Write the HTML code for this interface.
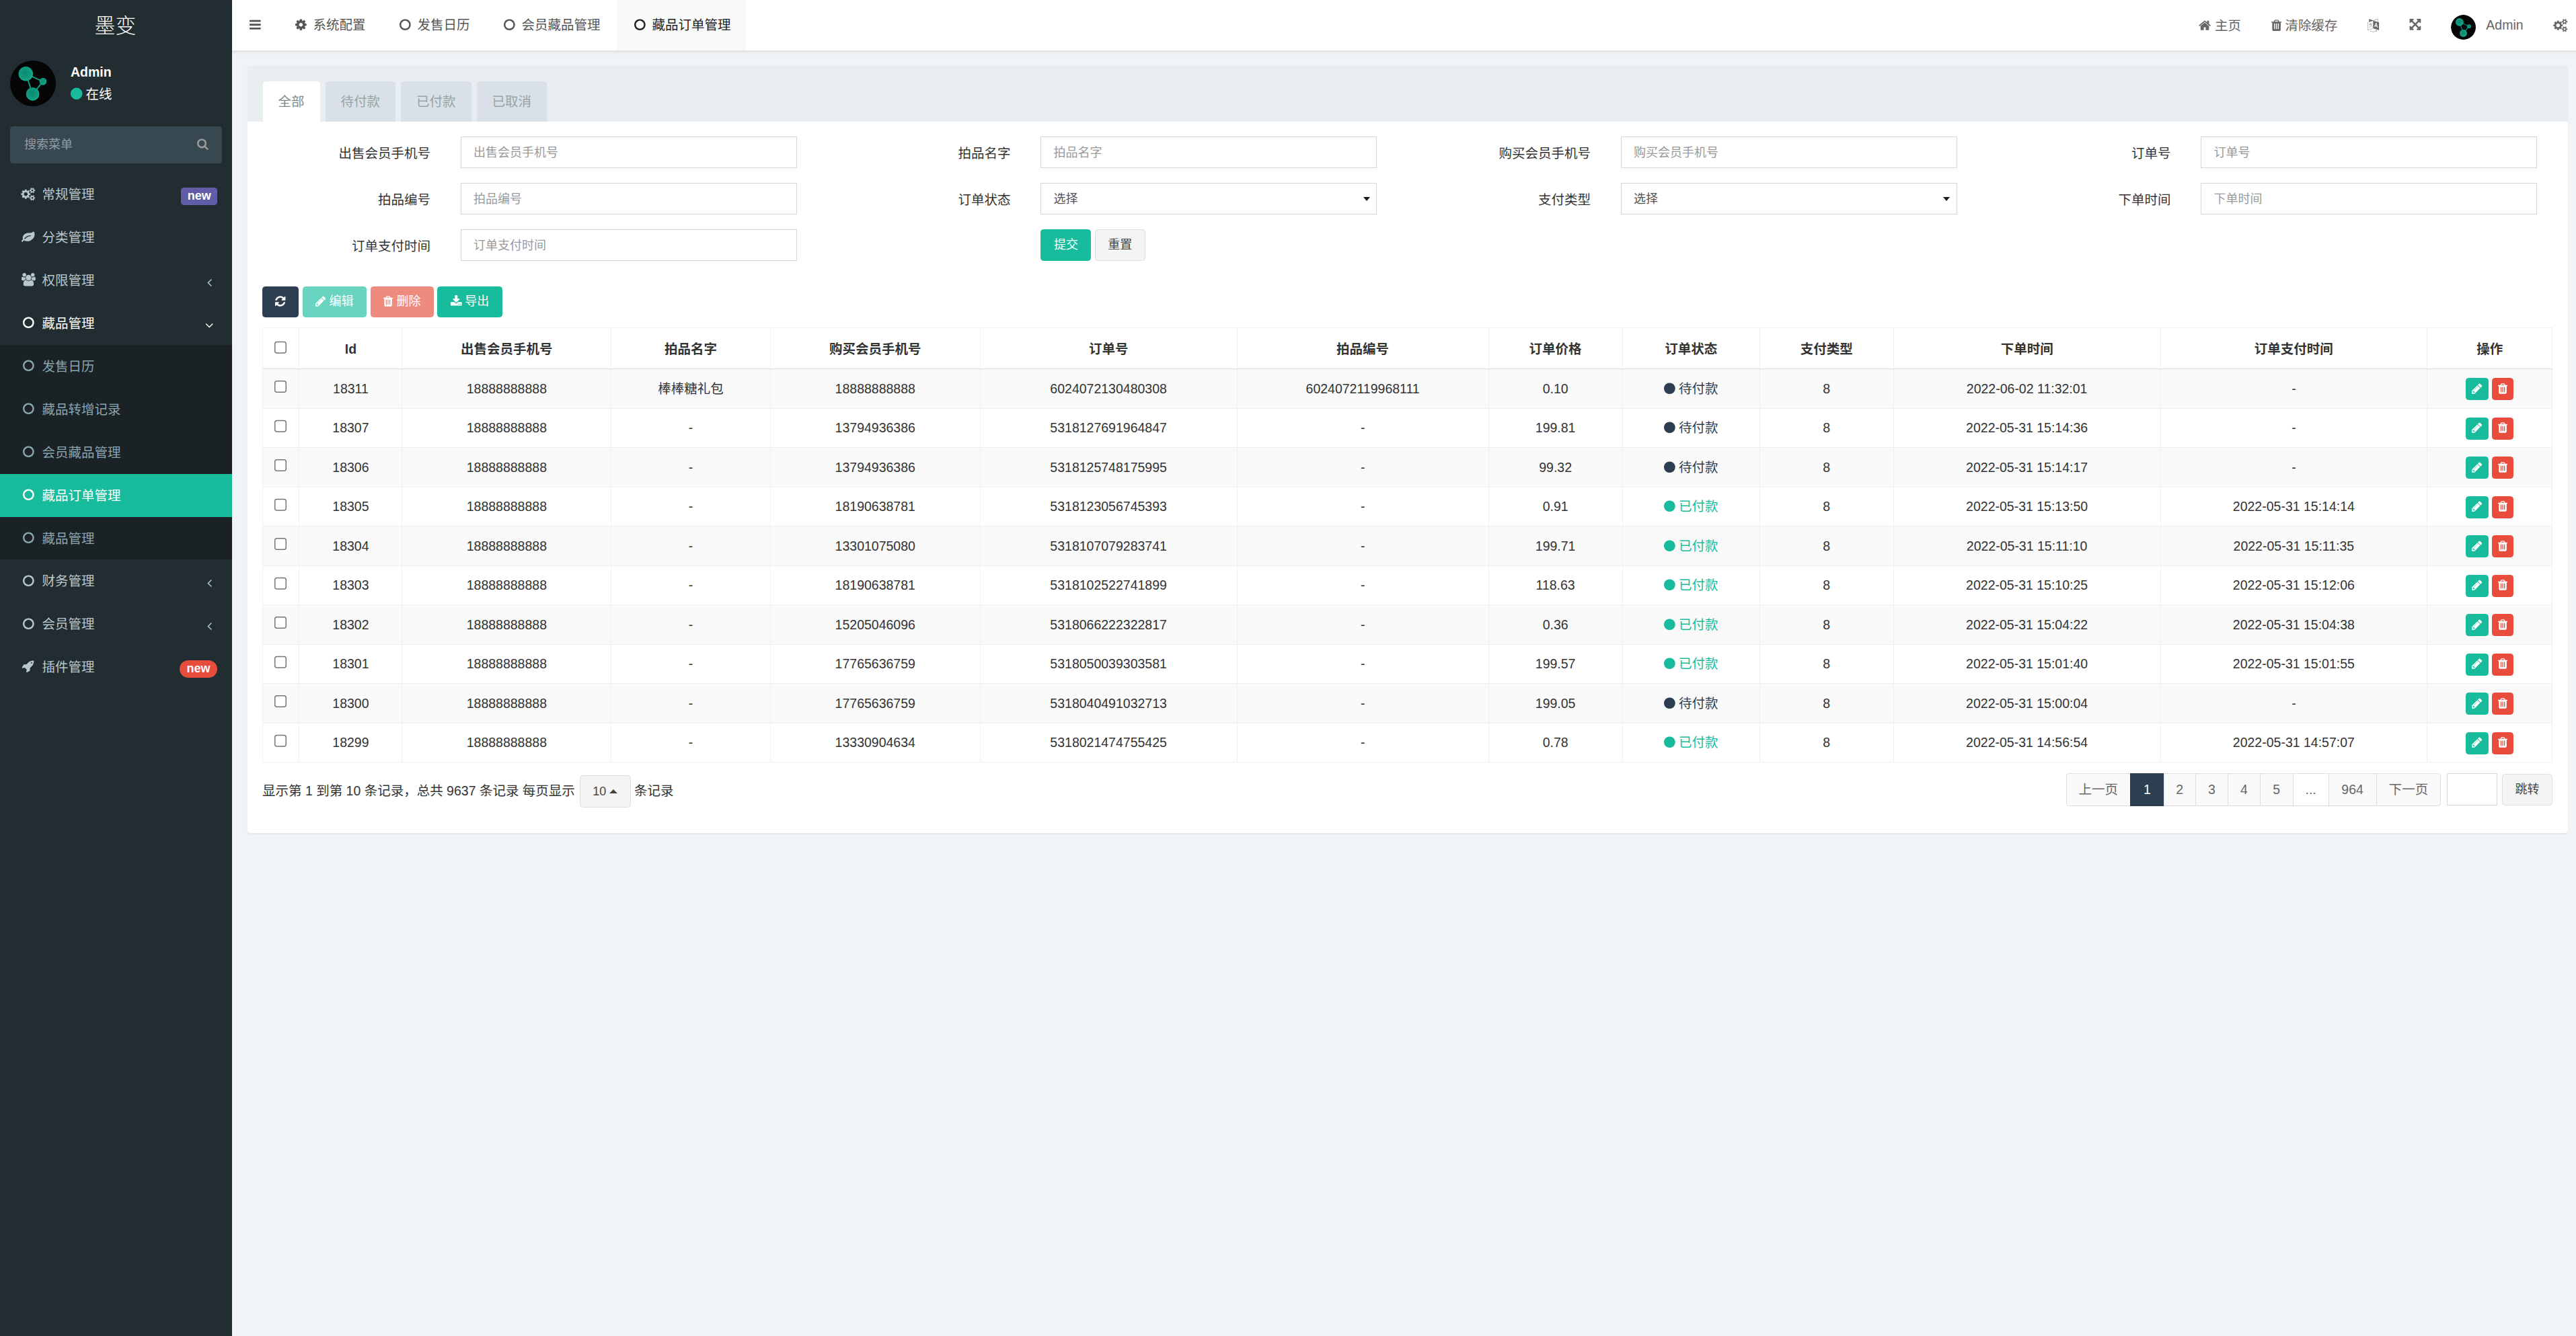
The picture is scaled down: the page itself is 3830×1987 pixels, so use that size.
<!DOCTYPE html>
<html lang="zh-CN"><head><meta charset="utf-8"><title>墨变</title>
<style>
*{box-sizing:border-box}
html,body{margin:0;padding:0;overflow:hidden;background:#f1f4f6}
body{font-family:"Liberation Sans","Noto Sans CJK SC",sans-serif;font-size:13px;line-height:1.42857;color:#333}
#w{zoom:1.5;width:2560px;height:1326px;position:relative;overflow:hidden;background:#f1f4f6}
a{text-decoration:none;color:inherit}
ul{list-style:none;margin:0;padding:0}
.fa{display:inline-block;height:1em;vertical-align:-0.143em;fill:currentColor;overflow:visible}
.fw{display:inline-block;width:1.2857em;text-align:center}
/* header */
.main-header{position:absolute;left:0;top:0;width:2560px;height:50px;z-index:10}
.logo{position:absolute;left:0;top:0;width:230px;height:50px;line-height:51.4px;text-align:center;font-size:20.6px;color:#fff;background:#222d32;font-weight:300;padding-right:1.4px}
.navbar{position:absolute;left:230px;top:0;right:0;height:50px;background:#fff;box-shadow:0 1px 3px rgba(0,0,0,.1)}
.sidebar-toggle{position:absolute;left:0;top:0;width:45px;height:50px;padding:14.5px 0 0 17px;line-height:20px;color:#555}
.addtabs{position:absolute;left:45px;top:0;height:50px;display:flex}
.addtabs li{height:50px;margin-right:1px}
.addtabs li a{display:block;height:50px;line-height:50px;padding:0 15px;color:#555;white-space:pre}
.addtabs li.active a{background:#f9f9f9;color:#222}
.custom-menu{position:absolute;right:0;top:0;height:50px;display:flex}
.custom-menu li a{display:block;padding:15px;line-height:20px;height:50px;color:#666;white-space:pre}
.custom-menu li.user a{padding-top:14.5px;padding-bottom:10.5px}
.custom-menu li.n2 a,.custom-menu li.n4 a{padding-right:14px}
.user-image{float:left;width:25px;height:25px;margin-right:10px;border-radius:50%}
.custom-menu li.user span{line-height:20px;display:inline-block}
/* sidebar */
.main-sidebar{position:absolute;left:0;top:0;width:230px;height:1326px;padding-top:50px;background:#222d32;z-index:5}
.user-panel{position:relative;padding:10px;height:65px}
.user-panel .img{position:absolute;left:10px;top:9.7px;width:45.4px;height:45.4px}
.user-panel .info{position:absolute;left:55px;top:10px;padding:2.9px 5px 5px 15px;color:#fff;line-height:1}
.user-panel .info p{font-weight:700;margin:0 0 5.6px 0;line-height:18px}
.user-panel .online{color:#18bc9c;font-size:13.6px;margin-right:3.4px;position:relative;top:-0.3px}
.sidebar-form{margin:10px 10px 9.6px;height:37px;border-radius:3px;background:#374850;position:relative;color:#8b9ba3;font-size:13px}
.sidebar-form .ph{position:absolute;left:14px;top:0;line-height:36px;color:#8e9ea6;font-size:12px}
.sidebar-form .sbtn{position:absolute;right:13.5px;top:0;line-height:36px;color:#999;font-size:12px}
.sidebar-menu>li>a,.treeview-menu>li>a{display:block;position:relative;padding:12px 5px 12px 18px;color:#b8c7ce;white-space:pre;height:42.6px;line-height:18.6px}
.sidebar-menu .fw{width:20px}
.sidebar-menu>li.open>a{color:#fff}
.treeview-menu{background:#1a2226}
.treeview-menu>li>a{color:#8aa4af}
.treeview-menu>li.active>a{background:#18bc9c;color:#fff}
.prc{position:absolute;right:14.6px;top:0;line-height:42.6px}
.prc.ang{right:20.2px;top:2.4px}
.prc.ang.dn{right:18.1px}
.sidebar-menu a>span:not(.prc):not(.fw){position:relative;top:0.7px}
.label{display:inline-block;font-size:12px;font-weight:700;color:#fff;line-height:1;padding:2px 6.3px 3px;border-radius:3px;vertical-align:middle;position:relative;top:1.3px}
.bg-purple{background:#605ca8}
.bg-red{background:#e74c3c;border-radius:9px;padding:2px 7px 3px}
/* content */
.content-wrapper{position:absolute;left:230px;top:50px;width:2330px;padding:15px}
.panel{background:#fff;border-radius:3px;box-shadow:0 1px 1px rgba(0,0,0,.05);width:2300px}
.panel-heading{background:#e8edf0;padding:15.67px 15.4px 0;height:55.67px;border-radius:3px 3px 0 0}
.nav-tabs{display:flex}
.nav-tabs li{margin-right:5.33px}
.nav-tabs li a{display:block;padding:0 14.67px;height:40px;line-height:39px;border:1px solid transparent;border-bottom:0;background:#d9e0e7;color:#95a5a6;border-radius:3px 3px 0 0}
.nav-tabs li.active a{background:#fff;color:#7b8a8b}
.panel-body{padding:14.7px 15px 15px}
/* form */
.commonsearch{margin:0 -15px}
.frow{display:flex;flex-wrap:wrap}
.col{width:25%;padding:0 15px}
.fg{display:flex;margin-bottom:14.6px;height:31.4px}
.fg label{width:33.3333%;padding:0 15px;text-align:right;line-height:31px;padding-top:1px;color:#333;white-space:nowrap}
.fg .ctl{width:66.6667%;padding:0 15px;white-space:pre}
.fc{display:block;height:31.4px;border:1px solid #d2d6de;background:#fff;font-size:12px;padding:0 12px;line-height:31px;color:#999;position:relative;border-radius:0}
.fc.sel{color:#555}
.fc.sel i{position:absolute;right:6.4px;top:13.3px;width:0;height:0;border-left:3.6px solid transparent;border-right:3.6px solid transparent;border-top:4.2px solid #1a1a1a}
.btn{display:inline-block;padding:6.33px 12.33px;font-size:12px;line-height:17.14px;border:1px solid transparent;border-radius:3px;text-align:center;white-space:pre;vertical-align:middle}
.btn-success{background:#18bc9c;border-color:#18bc9c;color:#fff}
.btn-danger{background:#e74c3c;border-color:#e74c3c;color:#fff}
.btn-primary{background:#2c3e50;border-color:#2c3e50;color:#fff}
.btn-default{background:#f4f4f4;border-color:#ddd;color:#444}
.btn.disabled{opacity:.65}
.toolbar{margin:10.6px 0 10px;height:31px;white-space:nowrap;font-size:0;display:flex}
.toolbar .btn{margin-right:4px;font-size:12px;padding-left:0;padding-right:0}
.toolbar .b1{width:36px}.toolbar .b2{width:63.2px;margin-right:4.4px}.toolbar .b3{width:62.2px;margin-right:3.7px}.toolbar .b4{width:64.3px}
/* table */
.table{border-collapse:collapse;table-layout:fixed;width:2270px;border:1px solid #f0f0f0}
.table th,.table td{border:1px solid #f0f0f0;text-align:center;vertical-align:middle;padding:0}
.table th{border-bottom:1px solid #ddd;font-weight:700}
.th-inner{padding:8.6px 8px 7.4px;line-height:24px;white-space:nowrap}
.table td{padding:0 8px 0.7px;height:39px;line-height:20px;white-space:nowrap}
.table tbody tr:nth-child(odd){background:#f9f9f9}
.table input{margin:0;width:13px;height:13px;vertical-align:middle;position:relative;top:-2.6px}
.btn-xs{padding:1.33px 5.4px;font-size:12px;line-height:18px;position:relative;top:0.6px}
.text-primary{color:#2c3e50}
.text-success{color:#18bc9c}
/* pagination */
.fixed-table-pagination{height:54.7px;position:relative}
.pagination-detail{position:absolute;left:0;top:11px;line-height:34px;white-space:pre}
.pagination-detail .btn{padding:6.33px 12.2px;line-height:18px;vertical-align:middle;margin-top:-0.6px;margin-left:1.2px}
.pull-right{position:absolute;right:0;top:10.6px;display:flex}
.pagination{display:flex;border-radius:3px}
.pagination li a{display:block;padding:6.33px 0;text-align:center;line-height:18.57px;border:1px solid #ddd;border-right:0;background:#fafafa;color:#666}
.pagination li:last-child a{border-right:1px solid #ddd;border-radius:0 3px 3px 0}
.pagination li:first-child a{border-radius:3px 0 0 3px}
.pagination li.active a{background:#2c3e50;border-color:#2c3e50;color:#fff}
.pagination li.dots a{background:#fff}
.jumpto{display:flex;margin-left:5.4px}
.jumpto .fc{width:50px;height:31.6px}
.jumpto .btn{margin-left:5px;width:50px;padding:6.33px 0;height:31px;margin-top:0.6px}

.caret{display:inline-block;width:0;height:0;vertical-align:middle;border-bottom:4px solid #444;border-left:4px solid transparent;border-right:4px solid transparent;position:relative;top:-0.5px}

</style></head>
<body><div id="w">

<header class="main-header">
<a class="logo">墨变</a>
<nav class="navbar">
<a class="sidebar-toggle"><svg class="fa" viewBox="128 0 1536 1792" style="width:0.8571em;"><path d="M1664 1344v128q0 26-19 45t-45 19h-1408q-26 0-45-19t-19-45v-128q0-26 19-45t45-19h1408q26 0 45 19t19 45zm0-512v128q0 26-19 45t-45 19h-1408q-26 0-45-19t-19-45v-128q0-26 19-45t45-19h1408q26 0 45 19t19 45zm0-512v128q0 26-19 45t-45 19h-1408q-26 0-45-19t-19-45v-128q0-26 19-45t45-19h1408q26 0 45 19t19 45z"/></svg></a>
<ul class="addtabs">
<li><a><span class="fw"><svg class="fa" viewBox="128 0 1536 1792" style="width:0.8571em;"><path d="M1152 896q0-106-75-181t-181-75-181 75-75 181 75 181 181 75 181-75 75-181zm512-109v222q0 12-8 23t-20 13l-185 28q-19 54-39 91 35 50 107 138 10 12 10 25t-9 23q-27 37-99 108t-94 71q-12 0-26-9l-138-108q-44 23-91 38-16 136-29 186-7 28-36 28h-222q-14 0-24.500-8.500t-11.500-21.500l-28-184q-49-16-90-37l-141 107q-10 9-25 9-14 0-25-11-126-114-165-168-7-10-7-23 0-12 8-23 15-21 51-66.500t54-70.500q-27-50-41-99l-183-27q-13-2-21-12.500t-8-23.500v-222q0-12 8-23t19-13l186-28q14-46 39-92-40-57-107-138-10-12-10-24 0-10 9-23 26-36 98.500-107.500t94.500-71.500q13 0 26 10l138 107q44-23 91-38 16-136 29-186 7-28 36-28h222q14 0 24.500 8.500t11.500 21.500l28 184q49 16 90 37l142-107q9-9 24-9 13 0 25 10 129 119 165 170 7 8 7 22 0 12-8 23-15 21-51 66.500t-54 70.500q26 50 41 98l183 28q13 2 21 12.500t8 23.500z"/></svg></span> <span>系统配置</span></a></li>
<li><a><span class="fw"><svg class="fa" viewBox="128 0 1536 1792" style="width:0.8571em;"><path d="M896 352q-148 0-273 73t-198 198-73 273 73 273 198 198 273 73 273-73 198-198 73-273-73-273-198-198-273-73zm768 544q0 209-103 385.500t-279.500 279.500-385.500 103-385.500-103-279.500-279.500-103-385.500 103-385.500 279.500-279.500 385.500-103 385.500 103 279.500 279.500 103 385.500z"/></svg></span> <span>发售日历</span></a></li>
<li><a><span class="fw"><svg class="fa" viewBox="128 0 1536 1792" style="width:0.8571em;"><path d="M896 352q-148 0-273 73t-198 198-73 273 73 273 198 198 273 73 273-73 198-198 73-273-73-273-198-198-273-73zm768 544q0 209-103 385.500t-279.500 279.500-385.500 103-385.500-103-279.500-279.500-103-385.500 103-385.500 279.500-279.500 385.500-103 385.500 103 279.500 279.500 103 385.500z"/></svg></span> <span>会员藏品管理</span></a></li>
<li class="active"><a><span class="fw"><svg class="fa" viewBox="128 0 1536 1792" style="width:0.8571em;"><path d="M896 352q-148 0-273 73t-198 198-73 273 73 273 198 198 273 73 273-73 198-198 73-273-73-273-198-198-273-73zm768 544q0 209-103 385.500t-279.500 279.500-385.500 103-385.500-103-279.500-279.500-103-385.500 103-385.500 279.500-279.500 385.500-103 385.500 103 279.500 279.500 103 385.500z"/></svg></span> <span>藏品订单管理</span></a></li>
</ul>
<ul class="custom-menu">
<li><a><svg class="fa" viewBox="64 0 1664 1792" style="width:0.9286em;"><path d="M1472 992v480q0 26-19 45t-45 19h-384v-384h-256v384h-384q-26 0-45-19t-19-45v-480q0-1 .5-3t.5-3l575-474 575 474q1 2 1 6zm223-69l-62 74q-8 9-21 11h-3q-13 0-21-7l-692-577-692 577q-12 8-24 7-13-2-21-11l-62-74q-8-10-7-23.500t11-21.500l719-599q32-26 76-26t76 26l244 204v-195q0-14 9-23t23-9h192q14 0 23 9t9 23v408l219 182q10 8 11 21.500t-7 23.500z"/></svg> 主页</a></li>
<li class="n2"><a><svg class="fa" viewBox="192 0 1408 1792" style="width:0.7857em;"><path d="M704 1376v-704q0-14-9-23t-23-9h-64q-14 0-23 9t-9 23v704q0 14 9 23t23 9h64q14 0 23-9t9-23zm256 0v-704q0-14-9-23t-23-9h-64q-14 0-23 9t-9 23v704q0 14 9 23t23 9h64q14 0 23-9t9-23zm256 0v-704q0-14-9-23t-23-9h-64q-14 0-23 9t-9 23v704q0 14 9 23t23 9h64q14 0 23-9t9-23zm-544-992h448l-48-117q-7-9-17-11h-317q-10 2-17 11zm928 32v64q0 14-9 23t-23 9h-96v948q0 83-47 143.500t-113 60.500h-832q-66 0-113-58.500t-47-141.500v-952h-96q-14 0-23-9t-9-23v-64q0-14 9-23t23-9h309l70-167q15-37 54-63t79-26h320q40 0 79 26t54 63l70 167h309q14 0 23 9t9 23z"/></svg> 清除缓存</a></li>
<li><a><svg class="fa" viewBox="0 0 1792 1792" style="width:1.0000em;"><path d="M782 1078q-1 3-12.500-.500t-31.500-11.500l-20-9q-44-20-87-49-7-5-41-31.500t-38-28.500q-67 103-134 181-81 95-105 110-4 2-19.500 4t-18.500 0q6-4 82-92 21-24 85.500-115t78.500-118q17-30 51-98.500t36-77.500q-8-1-110 33-8 2-27.500 7.500t-34.500 9.500-17 5q-2 2-2 10.500t-1 9.500q-5 10-31 15-23 7-47 0-18-4-28-21-4-6-5-23 6-2 24.500-5t29.500-6q58-16 105-32 100-35 102-35 10-2 43-19.500t44-21.500q9-3 21.500-8t14.500-5.500 6 .5q2 12-1 33 0 2-12.500 27t-26.500 53.500-17 33.500q-25 50-77 131l64 28q12 6 74.500 32t67.500 28q4 1 10.500 25.500t4.500 30.500zm-205-486q3 15-4 28-12 23-50 38-30 12-60 12-26-3-49-26-14-15-18-41l1-3q3 3 19.500 5t26.500 0 58-16q36-12 55-14 17 0 21 17zm698 129l63 227-139-42zm-1108 800l694-232v-1032l-694 233v1031zm1241-317l102 31-181-657-100-31-216 536 102 31 45-110 211 65zm-503-962l573 184v-380zm311 1323l158 13-54 160-40-66q-130 83-276 108-58 12-91 12h-84q-79 0-199.500-39t-183.500-85q-8-7-8-16 0-8 5-13.500t13-5.500q4 0 18 7.500t30.500 16.500 20.500 11q73 37 159.500 61.500t157.500 24.500q95 0 167-14.500t157-50.500q15-7 30.500-15.500t34-19 28.500-16.500zm448-1079v1079l-774-246q-14 6-375 127.500t-368 121.500q-13 0-18-13 0-1-1-3v-1078q3-9 4-10 5-6 20-11 106-35 149-50v-384l558 198q2 0 160.500-55t316-108.500 161.500-53.500q20 0 20 21v418z"/></svg></a></li>
<li class="n4"><a><svg class="fa" viewBox="128 0 1536 1792" style="width:0.8571em;"><path d="M1283 413l-355 355 355 355 144-144q29-31 70-14 39 17 39 59v448q0 26-19 45t-45 19h-448q-42 0-59-40-17-39 14-69l144-144-355-355-355 355 144 144q31 30 14 69-17 40-59 40h-448q-26 0-45-19t-19-45v-448q0-42 40-59 39-17 69 14l144 144 355-355-355-355-144 144q-19 19-45 19-12 0-24-5-40-17-40-59v-448q0-26 19-45t45-19h448q42 0 59 40 17 39-14 69l-144 144 355 355 355-355-144-144q-31-30-14-69 17-40 59-40h448q26 0 45 19t19 45v448q0 42-39 59-13 5-25 5-26 0-45-19z"/></svg></a></li>
<li class="user"><a><svg class="user-image" width="25" height="25" viewBox="0 0 100 100"><radialGradient id="guser-image" cx="45%" cy="45%" r="60%"><stop offset="0" stop-color="#0d876f"/><stop offset="0.7" stop-color="#109c80"/><stop offset="1" stop-color="#17b796"/></radialGradient><circle cx="50" cy="50" r="50" fill="#050505"/><g stroke="#13a083" stroke-width="2.8" fill="none"><path d="M34.2 29 L49.3 73.1 L71.8 45.7 Z"/></g><circle cx="34.2" cy="29" r="15.8" fill="url(#guser-image)"/><circle cx="49.3" cy="73.1" r="14.5" fill="url(#guser-image)"/><circle cx="71.8" cy="45.7" r="7.9" fill="url(#guser-image)"/></svg><span>Admin</span></a></li>
<li><a><svg class="fa" viewBox="64 0 1920 1792" style="width:1.0714em;"><path d="M896 896q0-106-75-181t-181-75-181 75-75 181 75 181 181 75 181-75 75-181zm768 512q0-52-38-90t-90-38-90 38-38 90q0 53 37.500 90.500t90.500 37.500 90.500-37.500 37.500-90.500zm0-1024q0-52-38-90t-90-38-90 38-38 90q0 53 37.500 90.500t90.500 37.500 90.500-37.500 37.500-90.500zm-384 421v185q0 10-7 19.500t-16 10.500l-155 24q-11 35-32 76 34 48 90 115 7 11 7 20 0 12-7 19-23 30-82.500 89.500t-78.500 59.500q-11 0-21-7l-115-90q-37 19-77 31-11 108-23 155-7 24-30 24h-186q-11 0-20-7.500t-10-17.500l-23-153q-34-10-75-31l-118 89q-7 7-20 7-11 0-21-8-144-133-144-160 0-9 7-19 10-14 41-53t47-61q-23-44-35-82l-152-24q-10-1-17-9.500t-7-19.500v-185q0-10 7-19.500t16-10.500l155-24q11-35 32-76-34-48-90-115-7-11-7-20 0-12 7-20 22-30 82-89t79-59q11 0 21 7l115 90q34-18 77-32 11-108 23-154 7-24 30-24h186q11 0 20 7.500t10 17.500l23 153q34 10 75 31l118-89q8-7 20-7 11 0 21 8 144 133 144 160 0 8-7 19-12 16-42 54t-45 60q23 48 34 82l152 23q10 2 17 10.500t7 19.500zm640 533v140q0 16-149 31-12 27-30 52 51 113 51 138 0 4-4 7-122 71-124 71-8 0-46-47t-52-68q-20 2-30 2t-30-2q-14 21-52 68t-46 47q-2 0-124-71-4-3-4-7 0-25 51-138-18-25-30-52-149-15-149-31v-140q0-16 149-31 13-29 30-52-51-113-51-138 0-4 4-7 4-2 35-20t59-34 30-16q8 0 46 46.500t52 67.500q20-2 30-2t30 2q51-71 92-112l6-2q4 0 124 70 4 3 4 7 0 25-51 138 17 23 30 52 149 15 149 31zm0-1024v140q0 16-149 31-12 27-30 52 51 113 51 138 0 4-4 7-122 71-124 71-8 0-46-47t-52-68q-20 2-30 2t-30-2q-14 21-52 68t-46 47q-2 0-124-71-4-3-4-7 0-25 51-138-18-25-30-52-149-15-149-31v-140q0-16 149-31 13-29 30-52-51-113-51-138 0-4 4-7 4-2 35-20t59-34 30-16q8 0 46 46.500t52 67.500q20-2 30-2t30 2q51-71 92-112l6-2q4 0 124 70 4 3 4 7 0 25-51 138 17 23 30 52 149 15 149 31z"/></svg></a></li>
</ul>
</nav>
</header>


<aside class="main-sidebar">
<div class="user-panel">
<svg class="img" width="45" height="45" viewBox="0 0 100 100"><radialGradient id="gimg" cx="45%" cy="45%" r="60%"><stop offset="0" stop-color="#0d876f"/><stop offset="0.7" stop-color="#109c80"/><stop offset="1" stop-color="#17b796"/></radialGradient><circle cx="50" cy="50" r="50" fill="#050505"/><g stroke="#13a083" stroke-width="2.8" fill="none"><path d="M34.2 29 L49.3 73.1 L71.8 45.7 Z"/></g><circle cx="34.2" cy="29" r="15.8" fill="url(#gimg)"/><circle cx="49.3" cy="73.1" r="14.5" fill="url(#gimg)"/><circle cx="71.8" cy="45.7" r="7.9" fill="url(#gimg)"/></svg>
<div class="info"><p>Admin</p><span class="online"><svg class="fa" viewBox="128 0 1536 1792" style="width:0.8571em;"><path d="M1664 896q0 209-103 385.500t-279.500 279.500-385.500 103-385.500-103-279.500-279.500-103-385.500 103-385.500 279.500-279.500 385.500-103 385.500 103 279.500 279.500 103 385.500z"/></svg></span><span>在线</span></div>
</div>
<div class="sidebar-form"><span class="ph">搜索菜单</span><span class="sbtn"><svg class="fa" viewBox="64 0 1664 1792" style="width:0.9286em;"><path d="M1216 832q0-185-131.500-316.500t-316.500-131.500-316.500 131.500-131.500 316.500 131.500 316.500 316.500 131.500 316.500-131.500 131.500-316.500zm512 832q0 52-38 90t-90 38q-54 0-90-38l-343-342q-179 124-399 124-143 0-273.500-55.500t-225-150-150-225-55.500-273.500 55.500-273.500 150-225 225-150 273.500-55.500 273.500 55.500 225 150 150 225 55.500 273.500q0 220-124 399l343 343q37 37 37 90z"/></svg></span></div>
<ul class="sidebar-menu">
<li class=""><a><span class="fw"><svg class="fa" viewBox="64 0 1920 1792" style="width:1.0714em;"><path d="M896 896q0-106-75-181t-181-75-181 75-75 181 75 181 181 75 181-75 75-181zm768 512q0-52-38-90t-90-38-90 38-38 90q0 53 37.500 90.500t90.500 37.500 90.500-37.500 37.500-90.500zm0-1024q0-52-38-90t-90-38-90 38-38 90q0 53 37.500 90.500t90.500 37.500 90.500-37.500 37.500-90.500zm-384 421v185q0 10-7 19.500t-16 10.500l-155 24q-11 35-32 76 34 48 90 115 7 11 7 20 0 12-7 19-23 30-82.500 89.500t-78.500 59.500q-11 0-21-7l-115-90q-37 19-77 31-11 108-23 155-7 24-30 24h-186q-11 0-20-7.500t-10-17.500l-23-153q-34-10-75-31l-118 89q-7 7-20 7-11 0-21-8-144-133-144-160 0-9 7-19 10-14 41-53t47-61q-23-44-35-82l-152-24q-10-1-17-9.500t-7-19.500v-185q0-10 7-19.500t16-10.500l155-24q11-35 32-76-34-48-90-115-7-11-7-20 0-12 7-20 22-30 82-89t79-59q11 0 21 7l115 90q34-18 77-32 11-108 23-154 7-24 30-24h186q11 0 20 7.500t10 17.500l23 153q34 10 75 31l118-89q8-7 20-7 11 0 21 8 144 133 144 160 0 8-7 19-12 16-42 54t-45 60q23 48 34 82l152 23q10 2 17 10.500t7 19.500zm640 533v140q0 16-149 31-12 27-30 52 51 113 51 138 0 4-4 7-122 71-124 71-8 0-46-47t-52-68q-20 2-30 2t-30-2q-14 21-52 68t-46 47q-2 0-124-71-4-3-4-7 0-25 51-138-18-25-30-52-149-15-149-31v-140q0-16 149-31 13-29 30-52-51-113-51-138 0-4 4-7 4-2 35-20t59-34 30-16q8 0 46 46.500t52 67.500q20-2 30-2t30 2q51-71 92-112l6-2q4 0 124 70 4 3 4 7 0 25-51 138 17 23 30 52 149 15 149 31zm0-1024v140q0 16-149 31-12 27-30 52 51 113 51 138 0 4-4 7-122 71-124 71-8 0-46-47t-52-68q-20 2-30 2t-30-2q-14 21-52 68t-46 47q-2 0-124-71-4-3-4-7 0-25 51-138-18-25-30-52-149-15-149-31v-140q0-16 149-31 13-29 30-52-51-113-51-138 0-4 4-7 4-2 35-20t59-34 30-16q8 0 46 46.500t52 67.500q20-2 30-2t30 2q51-71 92-112l6-2q4 0 124 70 4 3 4 7 0 25-51 138 17 23 30 52 149 15 149 31z"/></svg></span> <span>常规管理</span><span class="prc"><small class="label bg-purple">new</small></span></a></li>
<li class=""><a><span class="fw"><svg class="fa" viewBox="0 0 1792 1792" style="width:1.0000em;"><path d="M1280 704q0-26-19-45t-45-19q-172 0-318 49.500t-259.500 134-235.500 219.500q-19 21-19 45 0 26 19 45t45 19q24 0 45-19 27-24 74-71t67-66q137-124 268.500-176t313.500-52q26 0 45-19t19-45zm512-198q0 95-20 193-46 224-184.500 383t-357.500 268q-214 108-438 108-148 0-286-47-15-5-88-42t-96-37q-16 0-39.500 32t-45 70-52.500 70-60 32q-43 0-63.500-17.500t-45.500-59.500q-2-4-6-11t-5.500-10-3-9.500-1.500-13.500q0-35 31-73.500t68-65.500 68-56 31-48q0-4-14-38t-16-44q-9-51-9-104 0-115 43.500-220t119-184.500 170.500-139 204-95.500q55-18 145-25.500t179.500-9 178.500-6 163.500-24 113.500-56.500l29.500-29.500 29.500-28 27-20 36.500-16 43.500-4.500q39 0 70.500 46t47.500 112 24 124 8 96z"/></svg></span> <span>分类管理</span></a></li>
<li class=""><a><span class="fw"><svg class="fa" viewBox="0 0 1920 1792" style="width:1.0714em;"><path d="M593 896q-162 5-265 128h-134q-82 0-138-40.500t-56-118.500q0-353 124-353 6 0 43.500 21t97.500 42.500 119 21.500q67 0 133-23-5 37-5 66 0 139 81 256zm1071 637q0 120-73 189.500t-194 69.500h-874q-121 0-194-69.500t-73-189.500q0-53 3.500-103.500t14-109 26.500-108.500 43-97.500 62-81 85.500-53.500 111.500-20q10 0 43 21.500t73 48 107 48 135 21.500 135-21.500 107-48 73-48 43-21.500q61 0 111.500 20t85.500 53.500 62 81 43 97.500 26.500 108.500 14 109 3.500 103.500zm-1024-1277q0 106-75 181t-181 75-181-75-75-181 75-181 181-75 181 75 75 181zm704 384q0 159-112.500 271.500t-271.500 112.500-271.500-112.500-112.500-271.500 112.500-271.500 271.500-112.500 271.500 112.500 112.500 271.500zm576 225q0 78-56 118.500t-138 40.500h-134q-103-123-265-128 81-117 81-256 0-29-5-66 66 23 133 23 59 0 119-21.500t97.500-42.500 43.500-21q124 0 124 353zm-128-609q0 106-75 181t-181 75-181-75-75-181 75-181 181-75 181 75 75 181z"/></svg></span> <span>权限管理</span><span class="prc ang"><svg class="fa" viewBox="576 0 640 1792" style="width:0.3571em;"><path d="M1203 544q0 13-10 23l-393 393 393 393q10 10 10 23t-10 23l-50 50q-10 10-23 10t-23-10l-466-466q-10-10-10-23t10-23l466-466q10-10 23-10t23 10l50 50q10 10 10 23z"/></svg></span></a></li>
<li class="open"><a><span class="fw"><svg class="fa" viewBox="128 0 1536 1792" style="width:0.8571em;"><path d="M896 352q-148 0-273 73t-198 198-73 273 73 273 198 198 273 73 273-73 198-198 73-273-73-273-198-198-273-73zm768 544q0 209-103 385.500t-279.500 279.500-385.500 103-385.500-103-279.500-279.500-103-385.500 103-385.500 279.500-279.500 385.500-103 385.500 103 279.500 279.500 103 385.500z"/></svg></span> <span>藏品管理</span><span class="prc ang dn"><svg class="fa" viewBox="320 0 1152 1792" style="width:0.6429em;"><path d="M1395 736q0 13-10 23l-466 466q-10 10-23 10t-23-10l-466-466q-10-10-10-23t10-23l50-50q10-10 23-10t23 10l393 393 393-393q10-10 23-10t23 10l50 50q10 10 10 23z"/></svg></span></a></li>
<ul class="treeview-menu">
<li class=""><a><span class="fw"><svg class="fa" viewBox="128 0 1536 1792" style="width:0.8571em;"><path d="M896 352q-148 0-273 73t-198 198-73 273 73 273 198 198 273 73 273-73 198-198 73-273-73-273-198-198-273-73zm768 544q0 209-103 385.500t-279.500 279.500-385.500 103-385.500-103-279.500-279.500-103-385.500 103-385.500 279.500-279.500 385.500-103 385.500 103 279.500 279.500 103 385.500z"/></svg></span> <span>发售日历</span></a></li>
<li class=""><a><span class="fw"><svg class="fa" viewBox="128 0 1536 1792" style="width:0.8571em;"><path d="M896 352q-148 0-273 73t-198 198-73 273 73 273 198 198 273 73 273-73 198-198 73-273-73-273-198-198-273-73zm768 544q0 209-103 385.500t-279.500 279.500-385.500 103-385.500-103-279.500-279.500-103-385.500 103-385.500 279.500-279.500 385.500-103 385.500 103 279.500 279.500 103 385.500z"/></svg></span> <span>藏品转增记录</span></a></li>
<li class=""><a><span class="fw"><svg class="fa" viewBox="128 0 1536 1792" style="width:0.8571em;"><path d="M896 352q-148 0-273 73t-198 198-73 273 73 273 198 198 273 73 273-73 198-198 73-273-73-273-198-198-273-73zm768 544q0 209-103 385.500t-279.500 279.500-385.500 103-385.500-103-279.500-279.500-103-385.500 103-385.500 279.500-279.500 385.500-103 385.500 103 279.500 279.500 103 385.500z"/></svg></span> <span>会员藏品管理</span></a></li>
<li class="active"><a><span class="fw"><svg class="fa" viewBox="128 0 1536 1792" style="width:0.8571em;"><path d="M896 352q-148 0-273 73t-198 198-73 273 73 273 198 198 273 73 273-73 198-198 73-273-73-273-198-198-273-73zm768 544q0 209-103 385.500t-279.500 279.500-385.500 103-385.500-103-279.500-279.500-103-385.500 103-385.500 279.500-279.500 385.500-103 385.500 103 279.500 279.500 103 385.500z"/></svg></span> <span>藏品订单管理</span></a></li>
<li class=""><a><span class="fw"><svg class="fa" viewBox="128 0 1536 1792" style="width:0.8571em;"><path d="M896 352q-148 0-273 73t-198 198-73 273 73 273 198 198 273 73 273-73 198-198 73-273-73-273-198-198-273-73zm768 544q0 209-103 385.500t-279.500 279.500-385.500 103-385.500-103-279.500-279.500-103-385.500 103-385.500 279.500-279.500 385.500-103 385.500 103 279.500 279.500 103 385.500z"/></svg></span> <span>藏品管理</span></a></li>
</ul>
<li class=""><a><span class="fw"><svg class="fa" viewBox="128 0 1536 1792" style="width:0.8571em;"><path d="M896 352q-148 0-273 73t-198 198-73 273 73 273 198 198 273 73 273-73 198-198 73-273-73-273-198-198-273-73zm768 544q0 209-103 385.500t-279.500 279.500-385.500 103-385.500-103-279.500-279.500-103-385.500 103-385.500 279.500-279.500 385.500-103 385.500 103 279.500 279.500 103 385.500z"/></svg></span> <span>财务管理</span><span class="prc ang"><svg class="fa" viewBox="576 0 640 1792" style="width:0.3571em;"><path d="M1203 544q0 13-10 23l-393 393 393 393q10 10 10 23t-10 23l-50 50q-10 10-23 10t-23-10l-466-466q-10-10-10-23t10-23l466-466q10-10 23-10t23 10l50 50q10 10 10 23z"/></svg></span></a></li>
<li class=""><a><span class="fw"><svg class="fa" viewBox="128 0 1536 1792" style="width:0.8571em;"><path d="M896 352q-148 0-273 73t-198 198-73 273 73 273 198 198 273 73 273-73 198-198 73-273-73-273-198-198-273-73zm768 544q0 209-103 385.500t-279.500 279.500-385.500 103-385.500-103-279.500-279.500-103-385.500 103-385.500 279.500-279.500 385.500-103 385.500 103 279.500 279.500 103 385.500z"/></svg></span> <span>会员管理</span><span class="prc ang"><svg class="fa" viewBox="576 0 640 1792" style="width:0.3571em;"><path d="M1203 544q0 13-10 23l-393 393 393 393q10 10 10 23t-10 23l-50 50q-10 10-23 10t-23-10l-466-466q-10-10-10-23t10-23l466-466q10-10 23-10t23 10l50 50q10 10 10 23z"/></svg></span></a></li>
<li class=""><a><span class="fw"><svg class="fa" viewBox="64 0 1664 1792" style="width:0.9286em;"><path d="M1440 448q0-40-28-68t-68-28-68 28-28 68 28 68 68 28 68-28 28-68zm224-288q0 249-75.500 430.500t-253.500 360.500q-81 80-195 176l-20 379q-2 16-16 26l-384 224q-7 4-16 4-12 0-23-9l-64-64q-13-14-8-32l85-276-281-281-276 85q-3 1-9 1-14 0-23-9l-64-64q-17-19-5-39l224-384q10-14 26-16l379-20q96-114 176-195 188-187 358-258t431-71q14 0 24 9.500t10 22.500z"/></svg></span> <span>插件管理</span><span class="prc"><small class="label bg-red">new</small></span></a></li>
</ul>
</aside>


<div class="content-wrapper">
<div class="panel">
<div class="panel-heading"><ul class="nav-tabs"><li class="active"><a>全部</a></li><li><a>待付款</a></li><li><a>已付款</a></li><li><a>已取消</a></li></ul></div>
<div class="panel-body">

<div class="commonsearch"><div class="frow">
<div class="col"><div class="fg"><label>出售会员手机号</label><div class="ctl"><div class="fc"><span>出售会员手机号</span></div></div></div></div>
<div class="col"><div class="fg"><label>拍品名字</label><div class="ctl"><div class="fc"><span>拍品名字</span></div></div></div></div>
<div class="col"><div class="fg"><label>购买会员手机号</label><div class="ctl"><div class="fc"><span>购买会员手机号</span></div></div></div></div>
<div class="col"><div class="fg"><label>订单号</label><div class="ctl"><div class="fc"><span>订单号</span></div></div></div></div>
<div class="col"><div class="fg"><label>拍品编号</label><div class="ctl"><div class="fc"><span>拍品编号</span></div></div></div></div>
<div class="col"><div class="fg"><label>订单状态</label><div class="ctl"><div class="fc sel"><span>选择</span><i></i></div></div></div></div>
<div class="col"><div class="fg"><label>支付类型</label><div class="ctl"><div class="fc sel"><span>选择</span><i></i></div></div></div></div>
<div class="col"><div class="fg"><label>下单时间</label><div class="ctl"><div class="fc"><span>下单时间</span></div></div></div></div>
<div class="col"><div class="fg"><label>订单支付时间</label><div class="ctl"><div class="fc"><span>订单支付时间</span></div></div></div></div>
<div class="col"><div class="fg"><label></label><div class="ctl"><a class="btn btn-success">提交</a> <a class="btn btn-default">重置</a></div></div></div>
</div></div>


<div class="toolbar">
<a class="btn btn-primary b1"><svg class="fa" viewBox="128 0 1536 1792" style="width:0.8571em;"><path d="M1639 1056q0 5-1 7-64 268-268 434.500t-478 166.500q-146 0-282.500-55t-243.500-157l-129 129q-19 19-45 19t-45-19-19-45v-448q0-26 19-45t45-19h448q26 0 45 19t19 45-19 45l-137 137q71 66 161 102t187 36q134 0 250-65t186-179q11-17 53-117 8-23 30-23h192q13 0 22.500 9.500t9.500 22.500zm25-800v448q0 26-19 45t-45 19h-448q-26 0-45-19t-19-45 19-45l138-138q-148-137-349-137-134 0-250 65t-186 179q-11 17-53 117-8 23-30 23h-199q-13 0-22.500-9.500t-9.500-22.500v-7q65-268 270-434.500t480-166.500q146 0 284 55.500t245 156.500l130-129q19-19 45-19t45 19 19 45z"/></svg></a>
<a class="btn btn-success disabled b2"><svg class="fa" viewBox="128 0 1536 1792" style="width:0.8571em;"><path d="M491 1536l91-91-235-235-91 91v107h128v128h107zm523-928q0-22-22-22-10 0-17 7l-542 542q-7 7-7 17 0 22 22 22 10 0 17-7l542-542q7-7 7-17zm-54-192l416 416-832 832h-416v-416zm683 96q0 53-37 90l-166 166-416-416 166-165q36-38 90-38 53 0 91 38l235 234q37 39 37 91z"/></svg> 编辑</a>
<a class="btn btn-danger disabled b3"><svg class="fa" viewBox="192 0 1408 1792" style="width:0.7857em;"><path d="M704 1376v-704q0-14-9-23t-23-9h-64q-14 0-23 9t-9 23v704q0 14 9 23t23 9h64q14 0 23-9t9-23zm256 0v-704q0-14-9-23t-23-9h-64q-14 0-23 9t-9 23v704q0 14 9 23t23 9h64q14 0 23-9t9-23zm256 0v-704q0-14-9-23t-23-9h-64q-14 0-23 9t-9 23v704q0 14 9 23t23 9h64q14 0 23-9t9-23zm-544-992h448l-48-117q-7-9-17-11h-317q-10 2-17 11zm928 32v64q0 14-9 23t-23 9h-96v948q0 83-47 143.500t-113 60.500h-832q-66 0-113-58.500t-47-141.500v-952h-96q-14 0-23-9t-9-23v-64q0-14 9-23t23-9h309l70-167q15-37 54-63t79-26h320q40 0 79 26t54 63l70 167h309q14 0 23 9t9 23z"/></svg> 删除</a>
<a class="btn btn-success b4"><svg class="fa" viewBox="64 0 1664 1792" style="width:0.9286em;"><path d="M1344 1344q0-26-19-45t-45-19-45 19-19 45 19 45 45 19 45-19 19-45zm256 0q0-26-19-45t-45-19-45 19-19 45 19 45 45 19 45-19 19-45zm128-224v320q0 40-28 68t-68 28h-1472q-40 0-68-28t-28-68v-320q0-40 28-68t68-28h465l135 136q58 56 136 56t136-56l136-136h464q40 0 68 28t28 68zm-325-569q17 41-14 70l-448 448q-18 19-45 19t-45-19l-448-448q-31-29-14-70 17-39 59-39h256v-448q0-26 19-45t45-19h256q26 0 45 19t19 45v448h256q42 0 59 39z"/></svg> 导出</a>
</div>

<table class="table"><colgroup><col style="width:36.3px"><col style="width:102px"><col style="width:207.2px"><col style="width:157.8px"><col style="width:207.8px"><col style="width:254.7px"><col style="width:249.3px"><col style="width:132.7px"><col style="width:136px"><col style="width:132.7px"><col style="width:264.6px"><col style="width:264.4px"><col style="width:124.1px"></colgroup><thead><tr><th><div class="th-inner"><input type="checkbox"></div></th><th><div class="th-inner">Id</div></th><th><div class="th-inner">出售会员手机号</div></th><th><div class="th-inner">拍品名字</div></th><th><div class="th-inner">购买会员手机号</div></th><th><div class="th-inner">订单号</div></th><th><div class="th-inner">拍品编号</div></th><th><div class="th-inner">订单价格</div></th><th><div class="th-inner">订单状态</div></th><th><div class="th-inner">支付类型</div></th><th><div class="th-inner">下单时间</div></th><th><div class="th-inner">订单支付时间</div></th><th><div class="th-inner">操作</div></th></tr></thead><tbody><tr><td><input type="checkbox"></td><td>18311</td><td>18888888888</td><td>棒棒糖礼包</td><td>18888888888</td><td>6024072130480308</td><td>6024072119968111</td><td>0.10</td><td><span class="text-primary"><svg class="fa" viewBox="128 0 1536 1792" style="width:0.8571em;"><path d="M1664 896q0 209-103 385.500t-279.500 279.500-385.500 103-385.500-103-279.500-279.500-103-385.500 103-385.500 279.500-279.500 385.500-103 385.500 103 279.500 279.500 103 385.500z"/></svg> 待付款</span></td><td>8</td><td>2022-06-02 11:32:01</td><td>-</td><td><a class="btn btn-xs btn-success"><svg class="fa" viewBox="128 0 1536 1792" style="width:0.8571em;"><path d="M491 1536l91-91-235-235-91 91v107h128v128h107zm523-928q0-22-22-22-10 0-17 7l-542 542q-7 7-7 17 0 22 22 22 10 0 17-7l542-542q7-7 7-17zm-54-192l416 416-832 832h-416v-416zm683 96q0 53-37 90l-166 166-416-416 166-165q36-38 90-38 53 0 91 38l235 234q37 39 37 91z"/></svg></a> <a class="btn btn-xs btn-danger"><svg class="fa" viewBox="192 0 1408 1792" style="width:0.7857em;"><path d="M704 1376v-704q0-14-9-23t-23-9h-64q-14 0-23 9t-9 23v704q0 14 9 23t23 9h64q14 0 23-9t9-23zm256 0v-704q0-14-9-23t-23-9h-64q-14 0-23 9t-9 23v704q0 14 9 23t23 9h64q14 0 23-9t9-23zm256 0v-704q0-14-9-23t-23-9h-64q-14 0-23 9t-9 23v704q0 14 9 23t23 9h64q14 0 23-9t9-23zm-544-992h448l-48-117q-7-9-17-11h-317q-10 2-17 11zm928 32v64q0 14-9 23t-23 9h-96v948q0 83-47 143.500t-113 60.500h-832q-66 0-113-58.500t-47-141.500v-952h-96q-14 0-23-9t-9-23v-64q0-14 9-23t23-9h309l70-167q15-37 54-63t79-26h320q40 0 79 26t54 63l70 167h309q14 0 23 9t9 23z"/></svg></a></td></tr><tr><td><input type="checkbox"></td><td>18307</td><td>18888888888</td><td>-</td><td>13794936386</td><td>5318127691964847</td><td>-</td><td>199.81</td><td><span class="text-primary"><svg class="fa" viewBox="128 0 1536 1792" style="width:0.8571em;"><path d="M1664 896q0 209-103 385.500t-279.500 279.500-385.500 103-385.500-103-279.500-279.500-103-385.500 103-385.500 279.500-279.500 385.500-103 385.500 103 279.500 279.500 103 385.500z"/></svg> 待付款</span></td><td>8</td><td>2022-05-31 15:14:36</td><td>-</td><td><a class="btn btn-xs btn-success"><svg class="fa" viewBox="128 0 1536 1792" style="width:0.8571em;"><path d="M491 1536l91-91-235-235-91 91v107h128v128h107zm523-928q0-22-22-22-10 0-17 7l-542 542q-7 7-7 17 0 22 22 22 10 0 17-7l542-542q7-7 7-17zm-54-192l416 416-832 832h-416v-416zm683 96q0 53-37 90l-166 166-416-416 166-165q36-38 90-38 53 0 91 38l235 234q37 39 37 91z"/></svg></a> <a class="btn btn-xs btn-danger"><svg class="fa" viewBox="192 0 1408 1792" style="width:0.7857em;"><path d="M704 1376v-704q0-14-9-23t-23-9h-64q-14 0-23 9t-9 23v704q0 14 9 23t23 9h64q14 0 23-9t9-23zm256 0v-704q0-14-9-23t-23-9h-64q-14 0-23 9t-9 23v704q0 14 9 23t23 9h64q14 0 23-9t9-23zm256 0v-704q0-14-9-23t-23-9h-64q-14 0-23 9t-9 23v704q0 14 9 23t23 9h64q14 0 23-9t9-23zm-544-992h448l-48-117q-7-9-17-11h-317q-10 2-17 11zm928 32v64q0 14-9 23t-23 9h-96v948q0 83-47 143.500t-113 60.500h-832q-66 0-113-58.500t-47-141.500v-952h-96q-14 0-23-9t-9-23v-64q0-14 9-23t23-9h309l70-167q15-37 54-63t79-26h320q40 0 79 26t54 63l70 167h309q14 0 23 9t9 23z"/></svg></a></td></tr><tr><td><input type="checkbox"></td><td>18306</td><td>18888888888</td><td>-</td><td>13794936386</td><td>5318125748175995</td><td>-</td><td>99.32</td><td><span class="text-primary"><svg class="fa" viewBox="128 0 1536 1792" style="width:0.8571em;"><path d="M1664 896q0 209-103 385.500t-279.500 279.500-385.500 103-385.500-103-279.500-279.500-103-385.500 103-385.500 279.500-279.500 385.500-103 385.500 103 279.500 279.500 103 385.500z"/></svg> 待付款</span></td><td>8</td><td>2022-05-31 15:14:17</td><td>-</td><td><a class="btn btn-xs btn-success"><svg class="fa" viewBox="128 0 1536 1792" style="width:0.8571em;"><path d="M491 1536l91-91-235-235-91 91v107h128v128h107zm523-928q0-22-22-22-10 0-17 7l-542 542q-7 7-7 17 0 22 22 22 10 0 17-7l542-542q7-7 7-17zm-54-192l416 416-832 832h-416v-416zm683 96q0 53-37 90l-166 166-416-416 166-165q36-38 90-38 53 0 91 38l235 234q37 39 37 91z"/></svg></a> <a class="btn btn-xs btn-danger"><svg class="fa" viewBox="192 0 1408 1792" style="width:0.7857em;"><path d="M704 1376v-704q0-14-9-23t-23-9h-64q-14 0-23 9t-9 23v704q0 14 9 23t23 9h64q14 0 23-9t9-23zm256 0v-704q0-14-9-23t-23-9h-64q-14 0-23 9t-9 23v704q0 14 9 23t23 9h64q14 0 23-9t9-23zm256 0v-704q0-14-9-23t-23-9h-64q-14 0-23 9t-9 23v704q0 14 9 23t23 9h64q14 0 23-9t9-23zm-544-992h448l-48-117q-7-9-17-11h-317q-10 2-17 11zm928 32v64q0 14-9 23t-23 9h-96v948q0 83-47 143.500t-113 60.500h-832q-66 0-113-58.500t-47-141.500v-952h-96q-14 0-23-9t-9-23v-64q0-14 9-23t23-9h309l70-167q15-37 54-63t79-26h320q40 0 79 26t54 63l70 167h309q14 0 23 9t9 23z"/></svg></a></td></tr><tr><td><input type="checkbox"></td><td>18305</td><td>18888888888</td><td>-</td><td>18190638781</td><td>5318123056745393</td><td>-</td><td>0.91</td><td><span class="text-success"><svg class="fa" viewBox="128 0 1536 1792" style="width:0.8571em;"><path d="M1664 896q0 209-103 385.500t-279.500 279.500-385.500 103-385.500-103-279.500-279.500-103-385.500 103-385.500 279.500-279.500 385.500-103 385.500 103 279.500 279.500 103 385.500z"/></svg> 已付款</span></td><td>8</td><td>2022-05-31 15:13:50</td><td>2022-05-31 15:14:14</td><td><a class="btn btn-xs btn-success"><svg class="fa" viewBox="128 0 1536 1792" style="width:0.8571em;"><path d="M491 1536l91-91-235-235-91 91v107h128v128h107zm523-928q0-22-22-22-10 0-17 7l-542 542q-7 7-7 17 0 22 22 22 10 0 17-7l542-542q7-7 7-17zm-54-192l416 416-832 832h-416v-416zm683 96q0 53-37 90l-166 166-416-416 166-165q36-38 90-38 53 0 91 38l235 234q37 39 37 91z"/></svg></a> <a class="btn btn-xs btn-danger"><svg class="fa" viewBox="192 0 1408 1792" style="width:0.7857em;"><path d="M704 1376v-704q0-14-9-23t-23-9h-64q-14 0-23 9t-9 23v704q0 14 9 23t23 9h64q14 0 23-9t9-23zm256 0v-704q0-14-9-23t-23-9h-64q-14 0-23 9t-9 23v704q0 14 9 23t23 9h64q14 0 23-9t9-23zm256 0v-704q0-14-9-23t-23-9h-64q-14 0-23 9t-9 23v704q0 14 9 23t23 9h64q14 0 23-9t9-23zm-544-992h448l-48-117q-7-9-17-11h-317q-10 2-17 11zm928 32v64q0 14-9 23t-23 9h-96v948q0 83-47 143.500t-113 60.500h-832q-66 0-113-58.500t-47-141.500v-952h-96q-14 0-23-9t-9-23v-64q0-14 9-23t23-9h309l70-167q15-37 54-63t79-26h320q40 0 79 26t54 63l70 167h309q14 0 23 9t9 23z"/></svg></a></td></tr><tr><td><input type="checkbox"></td><td>18304</td><td>18888888888</td><td>-</td><td>13301075080</td><td>5318107079283741</td><td>-</td><td>199.71</td><td><span class="text-success"><svg class="fa" viewBox="128 0 1536 1792" style="width:0.8571em;"><path d="M1664 896q0 209-103 385.500t-279.500 279.500-385.500 103-385.500-103-279.500-279.500-103-385.500 103-385.500 279.500-279.500 385.500-103 385.500 103 279.500 279.500 103 385.500z"/></svg> 已付款</span></td><td>8</td><td>2022-05-31 15:11:10</td><td>2022-05-31 15:11:35</td><td><a class="btn btn-xs btn-success"><svg class="fa" viewBox="128 0 1536 1792" style="width:0.8571em;"><path d="M491 1536l91-91-235-235-91 91v107h128v128h107zm523-928q0-22-22-22-10 0-17 7l-542 542q-7 7-7 17 0 22 22 22 10 0 17-7l542-542q7-7 7-17zm-54-192l416 416-832 832h-416v-416zm683 96q0 53-37 90l-166 166-416-416 166-165q36-38 90-38 53 0 91 38l235 234q37 39 37 91z"/></svg></a> <a class="btn btn-xs btn-danger"><svg class="fa" viewBox="192 0 1408 1792" style="width:0.7857em;"><path d="M704 1376v-704q0-14-9-23t-23-9h-64q-14 0-23 9t-9 23v704q0 14 9 23t23 9h64q14 0 23-9t9-23zm256 0v-704q0-14-9-23t-23-9h-64q-14 0-23 9t-9 23v704q0 14 9 23t23 9h64q14 0 23-9t9-23zm256 0v-704q0-14-9-23t-23-9h-64q-14 0-23 9t-9 23v704q0 14 9 23t23 9h64q14 0 23-9t9-23zm-544-992h448l-48-117q-7-9-17-11h-317q-10 2-17 11zm928 32v64q0 14-9 23t-23 9h-96v948q0 83-47 143.500t-113 60.500h-832q-66 0-113-58.500t-47-141.500v-952h-96q-14 0-23-9t-9-23v-64q0-14 9-23t23-9h309l70-167q15-37 54-63t79-26h320q40 0 79 26t54 63l70 167h309q14 0 23 9t9 23z"/></svg></a></td></tr><tr><td><input type="checkbox"></td><td>18303</td><td>18888888888</td><td>-</td><td>18190638781</td><td>5318102522741899</td><td>-</td><td>118.63</td><td><span class="text-success"><svg class="fa" viewBox="128 0 1536 1792" style="width:0.8571em;"><path d="M1664 896q0 209-103 385.500t-279.500 279.500-385.500 103-385.500-103-279.500-279.500-103-385.500 103-385.500 279.500-279.500 385.500-103 385.500 103 279.500 279.500 103 385.500z"/></svg> 已付款</span></td><td>8</td><td>2022-05-31 15:10:25</td><td>2022-05-31 15:12:06</td><td><a class="btn btn-xs btn-success"><svg class="fa" viewBox="128 0 1536 1792" style="width:0.8571em;"><path d="M491 1536l91-91-235-235-91 91v107h128v128h107zm523-928q0-22-22-22-10 0-17 7l-542 542q-7 7-7 17 0 22 22 22 10 0 17-7l542-542q7-7 7-17zm-54-192l416 416-832 832h-416v-416zm683 96q0 53-37 90l-166 166-416-416 166-165q36-38 90-38 53 0 91 38l235 234q37 39 37 91z"/></svg></a> <a class="btn btn-xs btn-danger"><svg class="fa" viewBox="192 0 1408 1792" style="width:0.7857em;"><path d="M704 1376v-704q0-14-9-23t-23-9h-64q-14 0-23 9t-9 23v704q0 14 9 23t23 9h64q14 0 23-9t9-23zm256 0v-704q0-14-9-23t-23-9h-64q-14 0-23 9t-9 23v704q0 14 9 23t23 9h64q14 0 23-9t9-23zm256 0v-704q0-14-9-23t-23-9h-64q-14 0-23 9t-9 23v704q0 14 9 23t23 9h64q14 0 23-9t9-23zm-544-992h448l-48-117q-7-9-17-11h-317q-10 2-17 11zm928 32v64q0 14-9 23t-23 9h-96v948q0 83-47 143.500t-113 60.500h-832q-66 0-113-58.500t-47-141.500v-952h-96q-14 0-23-9t-9-23v-64q0-14 9-23t23-9h309l70-167q15-37 54-63t79-26h320q40 0 79 26t54 63l70 167h309q14 0 23 9t9 23z"/></svg></a></td></tr><tr><td><input type="checkbox"></td><td>18302</td><td>18888888888</td><td>-</td><td>15205046096</td><td>5318066222322817</td><td>-</td><td>0.36</td><td><span class="text-success"><svg class="fa" viewBox="128 0 1536 1792" style="width:0.8571em;"><path d="M1664 896q0 209-103 385.500t-279.500 279.500-385.500 103-385.500-103-279.500-279.500-103-385.500 103-385.500 279.500-279.500 385.500-103 385.500 103 279.500 279.500 103 385.500z"/></svg> 已付款</span></td><td>8</td><td>2022-05-31 15:04:22</td><td>2022-05-31 15:04:38</td><td><a class="btn btn-xs btn-success"><svg class="fa" viewBox="128 0 1536 1792" style="width:0.8571em;"><path d="M491 1536l91-91-235-235-91 91v107h128v128h107zm523-928q0-22-22-22-10 0-17 7l-542 542q-7 7-7 17 0 22 22 22 10 0 17-7l542-542q7-7 7-17zm-54-192l416 416-832 832h-416v-416zm683 96q0 53-37 90l-166 166-416-416 166-165q36-38 90-38 53 0 91 38l235 234q37 39 37 91z"/></svg></a> <a class="btn btn-xs btn-danger"><svg class="fa" viewBox="192 0 1408 1792" style="width:0.7857em;"><path d="M704 1376v-704q0-14-9-23t-23-9h-64q-14 0-23 9t-9 23v704q0 14 9 23t23 9h64q14 0 23-9t9-23zm256 0v-704q0-14-9-23t-23-9h-64q-14 0-23 9t-9 23v704q0 14 9 23t23 9h64q14 0 23-9t9-23zm256 0v-704q0-14-9-23t-23-9h-64q-14 0-23 9t-9 23v704q0 14 9 23t23 9h64q14 0 23-9t9-23zm-544-992h448l-48-117q-7-9-17-11h-317q-10 2-17 11zm928 32v64q0 14-9 23t-23 9h-96v948q0 83-47 143.500t-113 60.500h-832q-66 0-113-58.500t-47-141.500v-952h-96q-14 0-23-9t-9-23v-64q0-14 9-23t23-9h309l70-167q15-37 54-63t79-26h320q40 0 79 26t54 63l70 167h309q14 0 23 9t9 23z"/></svg></a></td></tr><tr><td><input type="checkbox"></td><td>18301</td><td>18888888888</td><td>-</td><td>17765636759</td><td>5318050039303581</td><td>-</td><td>199.57</td><td><span class="text-success"><svg class="fa" viewBox="128 0 1536 1792" style="width:0.8571em;"><path d="M1664 896q0 209-103 385.500t-279.500 279.500-385.500 103-385.500-103-279.500-279.500-103-385.500 103-385.500 279.500-279.500 385.500-103 385.500 103 279.500 279.500 103 385.500z"/></svg> 已付款</span></td><td>8</td><td>2022-05-31 15:01:40</td><td>2022-05-31 15:01:55</td><td><a class="btn btn-xs btn-success"><svg class="fa" viewBox="128 0 1536 1792" style="width:0.8571em;"><path d="M491 1536l91-91-235-235-91 91v107h128v128h107zm523-928q0-22-22-22-10 0-17 7l-542 542q-7 7-7 17 0 22 22 22 10 0 17-7l542-542q7-7 7-17zm-54-192l416 416-832 832h-416v-416zm683 96q0 53-37 90l-166 166-416-416 166-165q36-38 90-38 53 0 91 38l235 234q37 39 37 91z"/></svg></a> <a class="btn btn-xs btn-danger"><svg class="fa" viewBox="192 0 1408 1792" style="width:0.7857em;"><path d="M704 1376v-704q0-14-9-23t-23-9h-64q-14 0-23 9t-9 23v704q0 14 9 23t23 9h64q14 0 23-9t9-23zm256 0v-704q0-14-9-23t-23-9h-64q-14 0-23 9t-9 23v704q0 14 9 23t23 9h64q14 0 23-9t9-23zm256 0v-704q0-14-9-23t-23-9h-64q-14 0-23 9t-9 23v704q0 14 9 23t23 9h64q14 0 23-9t9-23zm-544-992h448l-48-117q-7-9-17-11h-317q-10 2-17 11zm928 32v64q0 14-9 23t-23 9h-96v948q0 83-47 143.500t-113 60.500h-832q-66 0-113-58.500t-47-141.500v-952h-96q-14 0-23-9t-9-23v-64q0-14 9-23t23-9h309l70-167q15-37 54-63t79-26h320q40 0 79 26t54 63l70 167h309q14 0 23 9t9 23z"/></svg></a></td></tr><tr><td><input type="checkbox"></td><td>18300</td><td>18888888888</td><td>-</td><td>17765636759</td><td>5318040491032713</td><td>-</td><td>199.05</td><td><span class="text-primary"><svg class="fa" viewBox="128 0 1536 1792" style="width:0.8571em;"><path d="M1664 896q0 209-103 385.500t-279.500 279.500-385.500 103-385.500-103-279.500-279.500-103-385.500 103-385.500 279.500-279.500 385.500-103 385.500 103 279.500 279.500 103 385.500z"/></svg> 待付款</span></td><td>8</td><td>2022-05-31 15:00:04</td><td>-</td><td><a class="btn btn-xs btn-success"><svg class="fa" viewBox="128 0 1536 1792" style="width:0.8571em;"><path d="M491 1536l91-91-235-235-91 91v107h128v128h107zm523-928q0-22-22-22-10 0-17 7l-542 542q-7 7-7 17 0 22 22 22 10 0 17-7l542-542q7-7 7-17zm-54-192l416 416-832 832h-416v-416zm683 96q0 53-37 90l-166 166-416-416 166-165q36-38 90-38 53 0 91 38l235 234q37 39 37 91z"/></svg></a> <a class="btn btn-xs btn-danger"><svg class="fa" viewBox="192 0 1408 1792" style="width:0.7857em;"><path d="M704 1376v-704q0-14-9-23t-23-9h-64q-14 0-23 9t-9 23v704q0 14 9 23t23 9h64q14 0 23-9t9-23zm256 0v-704q0-14-9-23t-23-9h-64q-14 0-23 9t-9 23v704q0 14 9 23t23 9h64q14 0 23-9t9-23zm256 0v-704q0-14-9-23t-23-9h-64q-14 0-23 9t-9 23v704q0 14 9 23t23 9h64q14 0 23-9t9-23zm-544-992h448l-48-117q-7-9-17-11h-317q-10 2-17 11zm928 32v64q0 14-9 23t-23 9h-96v948q0 83-47 143.500t-113 60.500h-832q-66 0-113-58.500t-47-141.500v-952h-96q-14 0-23-9t-9-23v-64q0-14 9-23t23-9h309l70-167q15-37 54-63t79-26h320q40 0 79 26t54 63l70 167h309q14 0 23 9t9 23z"/></svg></a></td></tr><tr><td><input type="checkbox"></td><td>18299</td><td>18888888888</td><td>-</td><td>13330904634</td><td>5318021474755425</td><td>-</td><td>0.78</td><td><span class="text-success"><svg class="fa" viewBox="128 0 1536 1792" style="width:0.8571em;"><path d="M1664 896q0 209-103 385.500t-279.500 279.500-385.500 103-385.500-103-279.500-279.500-103-385.500 103-385.500 279.500-279.500 385.500-103 385.500 103 279.500 279.500 103 385.500z"/></svg> 已付款</span></td><td>8</td><td>2022-05-31 14:56:54</td><td>2022-05-31 14:57:07</td><td><a class="btn btn-xs btn-success"><svg class="fa" viewBox="128 0 1536 1792" style="width:0.8571em;"><path d="M491 1536l91-91-235-235-91 91v107h128v128h107zm523-928q0-22-22-22-10 0-17 7l-542 542q-7 7-7 17 0 22 22 22 10 0 17-7l542-542q7-7 7-17zm-54-192l416 416-832 832h-416v-416zm683 96q0 53-37 90l-166 166-416-416 166-165q36-38 90-38 53 0 91 38l235 234q37 39 37 91z"/></svg></a> <a class="btn btn-xs btn-danger"><svg class="fa" viewBox="192 0 1408 1792" style="width:0.7857em;"><path d="M704 1376v-704q0-14-9-23t-23-9h-64q-14 0-23 9t-9 23v704q0 14 9 23t23 9h64q14 0 23-9t9-23zm256 0v-704q0-14-9-23t-23-9h-64q-14 0-23 9t-9 23v704q0 14 9 23t23 9h64q14 0 23-9t9-23zm256 0v-704q0-14-9-23t-23-9h-64q-14 0-23 9t-9 23v704q0 14 9 23t23 9h64q14 0 23-9t9-23zm-544-992h448l-48-117q-7-9-17-11h-317q-10 2-17 11zm928 32v64q0 14-9 23t-23 9h-96v948q0 83-47 143.500t-113 60.500h-832q-66 0-113-58.500t-47-141.500v-952h-96q-14 0-23-9t-9-23v-64q0-14 9-23t23-9h309l70-167q15-37 54-63t79-26h320q40 0 79 26t54 63l70 167h309q14 0 23 9t9 23z"/></svg></a></td></tr></tbody></table>

<div class="fixed-table-pagination">
<div class="pagination-detail"><span class="pagination-info">显示第 1 到第 10 条记录，总共 9637 条记录</span><span class="page-list"> 每页显示 <span class="btn btn-default dropdown-toggle"><span class="page-size">10</span> <span class="caret"></span></span> 条记录</span></div>
<div class="pull-right">
<ul class="pagination"><li class="" style="width:63.6px"><a>上一页</a></li><li class="active" style="width:33.1px"><a>1</a></li><li class="" style="width:31.3px"><a>2</a></li><li class="" style="width:32.5px"><a>3</a></li><li class="" style="width:31.5px"><a>4</a></li><li class="" style="width:32.7px"><a>5</a></li><li class="dots" style="width:35.4px"><a>...</a></li><li class="" style="width:47.2px"><a>964</a></li><li class="" style="width:64.6px"><a>下一页</a></li></ul>
<div class="jumpto"><span class="fc"></span><a class="btn btn-default">跳转</a></div>
</div>
</div>

</div>
</div>
</div>

</div></body></html>
